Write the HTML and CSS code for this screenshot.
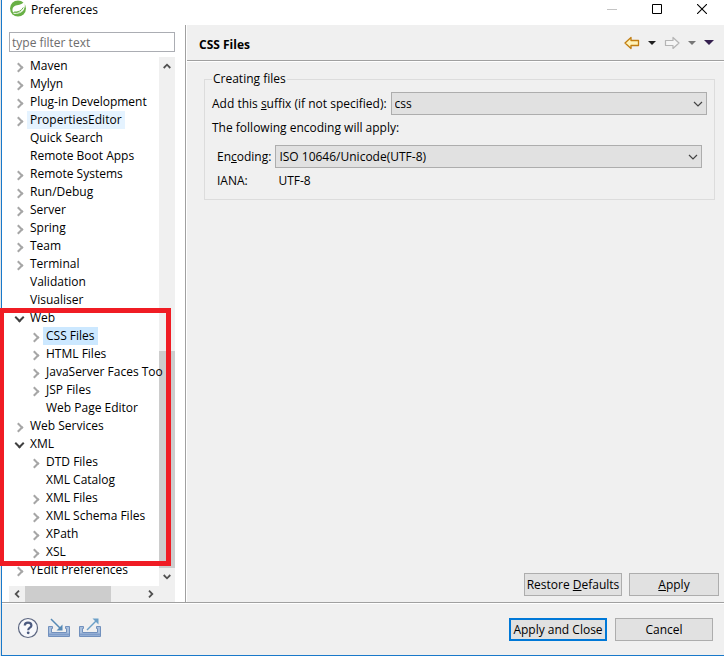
FILE: index.html
```html
<!DOCTYPE html>
<html lang="en">
<head>
    <meta charset="UTF-8">
    <meta name="viewport" content="width=device-width, initial-scale=1.0">
    <title>Preferences</title>
    <link rel="stylesheet" href="styles.css">
</head>
<body>
    <div class="window">
        <header class="titlebar">
            <svg class="logo" width="17" height="17" viewBox="0 0 17 17">
                <circle cx="8" cy="8.500" r="8" fill="#68b045"/>
                <path d="M14.300 1.500c1 3 .9 6.500-1 8.500-2.300 2.300-6 2-10.300 2.200-1.600-3.700.6-6.400 4-7C10.500 4.600 12.800 4 14.300 1.500z" fill="#fff"/>
                <path d="M3.500 13.300c4.500.4 8-.8 10.300-3.800" fill="none" stroke="#fff" stroke-width="1"/>
                <path d="M4 12.100c4 .1 7.500-1.100 9.300-4.600" fill="none" stroke="#68b045" stroke-width="1"/>
            </svg>
            <span class="title">Preferences</span>
            <button type="button" class="win-btn" aria-label="Minimize">
                <svg width="10" height="10" viewBox="0 0 10 10"><path d="M0 5.500h10" stroke="#c4c4c4"/></svg>
            </button>
            <button type="button" class="win-btn" aria-label="Maximize">
                <svg width="10" height="10" viewBox="0 0 10 10"><path d="M.5.5h9v9h-9z" fill="none" stroke="#000"/></svg>
            </button>
            <button type="button" class="win-btn" aria-label="Close">
                <svg width="10" height="10" viewBox="0 0 10 10"><path d="M0 0l10 10M10 0L0 10" stroke="#000" stroke-width="1.100"/></svg>
            </button>
        </header>

        <div class="content">
            <aside class="sidebar">
                <input type="text" class="filter" placeholder="type filter text" aria-label="Filter">
                <div class="tree-box">
                    <ul class="tree">
                        <li><button class="twistie" aria-label="Expand"></button><a href="#">Maven</a></li>
                        <li><button class="twistie" aria-label="Expand"></button><a href="#">Mylyn</a></li>
                        <li><button class="twistie" aria-label="Expand"></button><a href="#">Plug-in Development</a></li>
                        <li><button class="twistie" aria-label="Expand"></button><a href="#" class="hovered">PropertiesEditor</a></li>
                        <li class="leaf"><a href="#">Quick Search</a></li>
                        <li class="leaf"><a href="#">Remote Boot Apps</a></li>
                        <li><button class="twistie" aria-label="Expand"></button><a href="#">Remote Systems</a></li>
                        <li><button class="twistie" aria-label="Expand"></button><a href="#">Run/Debug</a></li>
                        <li><button class="twistie" aria-label="Expand"></button><a href="#">Server</a></li>
                        <li><button class="twistie" aria-label="Expand"></button><a href="#">Spring</a></li>
                        <li><button class="twistie" aria-label="Expand"></button><a href="#">Team</a></li>
                        <li><button class="twistie" aria-label="Expand"></button><a href="#">Terminal</a></li>
                        <li class="leaf"><a href="#">Validation</a></li>
                        <li class="leaf"><a href="#">Visualiser</a></li>
                        <li><button class="twistie open" aria-label="Collapse"></button><a href="#">Web</a>
                            <ul>
                                <li><button class="twistie" aria-label="Expand"></button><a href="#" class="selected">CSS Files</a></li>
                                <li><button class="twistie" aria-label="Expand"></button><a href="#">HTML Files</a></li>
                                <li><button class="twistie" aria-label="Expand"></button><a href="#">JavaServer Faces Too</a></li>
                                <li><button class="twistie" aria-label="Expand"></button><a href="#">JSP Files</a></li>
                                <li class="leaf"><a href="#">Web Page Editor</a></li>
                            </ul>
                        </li>
                        <li><button class="twistie" aria-label="Expand"></button><a href="#">Web Services</a></li>
                        <li><button class="twistie open" aria-label="Collapse"></button><a href="#">XML</a>
                            <ul>
                                <li><button class="twistie" aria-label="Expand"></button><a href="#">DTD Files</a></li>
                                <li class="leaf"><a href="#">XML Catalog</a></li>
                                <li><button class="twistie" aria-label="Expand"></button><a href="#">XML Files</a></li>
                                <li><button class="twistie" aria-label="Expand"></button><a href="#">XML Schema Files</a></li>
                                <li><button class="twistie" aria-label="Expand"></button><a href="#">XPath</a></li>
                                <li><button class="twistie" aria-label="Expand"></button><a href="#">XSL</a></li>
                            </ul>
                        </li>
                        <li><button class="twistie" aria-label="Expand"></button><a href="#">YEdit Preferences</a></li>
                    </ul>
                    <div class="vscroll">
                        <button type="button" aria-label="Scroll up"><svg width="8" height="6" viewBox="0 0 8 6"><path d="M.7 5L4 1.700 7.300 5" fill="none" stroke="#505050" stroke-width="1.800"/></svg></button>
                        <div class="vtrack"><div class="vthumb"></div></div>
                        <button type="button" aria-label="Scroll down"><svg width="8" height="6" viewBox="0 0 8 6"><path d="M.7 1L4 4.300 7.300 1" fill="none" stroke="#505050" stroke-width="1.800"/></svg></button>
                    </div>
                    <div class="hscroll">
                        <button type="button" aria-label="Scroll left"><svg width="6" height="8" viewBox="0 0 6 8"><path d="M5 .7L1.700 4 5 7.300" fill="none" stroke="#505050" stroke-width="1.800"/></svg></button>
                        <div class="htrack"><div class="hthumb"></div></div>
                        <button type="button" aria-label="Scroll right"><svg width="6" height="8" viewBox="0 0 6 8"><path d="M1 .7L4.300 4 1 7.300" fill="none" stroke="#505050" stroke-width="1.800"/></svg></button>
                    </div>
                    <div class="scroll-corner"></div>
                </div>
            </aside>

            <main class="page">
                <div class="page-header">
                    <h1>CSS Files</h1>
                    <button type="button" class="nav" aria-label="Back">
                        <svg width="16" height="14" viewBox="0 0 16 14"><path d="M1 7l6-5.500v3h7.500v5H7v3z" fill="#fff3b8" stroke="#c17d11" stroke-width="1.300" stroke-linejoin="round"/></svg>
                    </button>
                    <button type="button" class="nav" aria-label="Back history">
                        <svg width="8" height="4" viewBox="0 0 8 4"><path d="M0 0h8L4 4z" fill="#202020"/></svg>
                    </button>
                    <button type="button" class="nav" aria-label="Forward">
                        <svg width="16" height="14" viewBox="0 0 16 14"><path d="M15 7L9 1.500v3H1.500v5H9v3z" fill="#f5f5f5" stroke="#b4b4b4" stroke-width="1.200" stroke-linejoin="round"/></svg>
                    </button>
                    <button type="button" class="nav" aria-label="Forward history">
                        <svg width="8" height="4" viewBox="0 0 8 4"><path d="M0 0h8L4 4z" fill="#777"/></svg>
                    </button>
                    <button type="button" class="nav" aria-label="Menu">
                        <svg width="10" height="5" viewBox="0 0 10 5"><path d="M0 0h10L5 5z" fill="#35204f"/></svg>
                    </button>
                </div>

                <form class="settings">
                    <fieldset>
                        <legend>Creating files</legend>
                        <div class="row">
                            <label for="suffix">Add this <u>s</u>uffix (if not specified):</label>
                            <div class="select">
                                <select id="suffix"><option>css</option></select>
                                <svg width="10" height="6" viewBox="0 0 10 6"><path d="M1 1l4 4 4-4" fill="none" stroke="#444" stroke-width="1.200"/></svg>
                            </div>
                        </div>
                        <p>The following encoding will apply:</p>
                        <div class="encoding">
                            <label for="encoding">En<u>c</u>oding:</label>
                            <div class="select">
                                <select id="encoding"><option>ISO 10646/Unicode(UTF-8)</option></select>
                                <svg width="10" height="6" viewBox="0 0 10 6"><path d="M1 1l4 4 4-4" fill="none" stroke="#444" stroke-width="1.200"/></svg>
                            </div>
                            <span>IANA:</span>
                            <output class="iana">UTF-8</output>
                        </div>
                    </fieldset>
                    <div class="page-buttons">
                        <button type="reset" class="btn">Restore <u>D</u>efaults</button>
                        <button type="button" class="btn btn-apply"><u>A</u>pply</button>
                    </div>
                </form>
            </main>
        </div>

        <footer class="footer">
            <button type="button" class="icon-btn" aria-label="Help">
                <svg width="22" height="22" viewBox="0 0 22 22">
                    <circle cx="11" cy="11" r="9.500" fill="#f7f8fb" stroke="#5c6680" stroke-width="1.200"/>
                    <path d="M7.800 8.600C7.800 6.600 9 5.700 11 5.700s3.400 1 3.400 2.700c0 2.300-3.200 2.300-3.200 4.800" fill="none" stroke="#4b5a80" stroke-width="2.200"/>
                    <circle cx="11.200" cy="15.800" r="1.400" fill="#4b5a80"/>
                </svg>
            </button>
            <button type="button" class="icon-btn" aria-label="Import">
                <svg width="22" height="20" viewBox="0 0 22 20">
                    <path d="M.5 8.500h4v2h-1v4h15v-4h-1v-2h4v10H.5z" fill="#a9c0de" stroke="#7190bd"/>
                    <path d="M1 16.500h20" stroke="#7f9dca" stroke-width="2"/>
                    <path d="M3 1l10 10" stroke="#5689b5" stroke-width="1.500"/>
                    <path d="M14.500 12.500v-6l-6 6z" fill="#5689b5"/>
                </svg>
            </button>
            <button type="button" class="icon-btn" aria-label="Export">
                <svg width="22" height="20" viewBox="0 0 22 20">
                    <path d="M.5 8.500h4v2h-1v4h15v-4h-1v-2h4v10H.5z" fill="#a9c0de" stroke="#7190bd"/>
                    <path d="M1 16.500h20" stroke="#7f9dca" stroke-width="2"/>
                    <path d="M8 12L18 2" stroke="#6ca0c8" stroke-width="1.500"/>
                    <path d="M19.500.5v6l-6-6z" fill="#6ca0c8"/>
                </svg>
            </button>
            <div class="dialog-buttons">
                <button type="button" class="btn btn-default">Apply and Close</button>
                <button type="button" class="btn">Cancel</button>
            </div>
        </footer>

        <div class="highlight"></div>
    </div>
</body>
</html>
```

FILE: styles.css
```css
*,
*::before {
    box-sizing: border-box;
}

body {
    margin: 0;
    font-family: "Open Sans", "Noto Sans CJK KR", sans-serif;
    font-size: 12px;
    line-height: 18px;
    color: #000;
    background-color: #e4e4e4;
}

button,
input,
select {
    font: inherit;
    color: inherit;
    margin: 0;
    padding: 0;
    border: none;
    border-radius: 0;
    background: none;
}

svg {
    display: block;
}

a {
    color: inherit;
    text-decoration: none;
}

.window {
    position: relative;
    display: flex;
    flex-direction: column;
    min-height: 100vh;
    margin-left: 1px;
    border-left: 1px solid #1979ca;
    border-bottom: 1px solid #1979ca;
    background-color: #f0f0f0;
}

/* title bar */
.titlebar {
    display: flex;
    align-items: flex-start;
    height: 25px;
    padding-left: 8px;
    background-color: #fff;
}

.title {
    flex: 1;
    padding-top: 1px;
    margin-left: 4px;
}

.win-btn {
    display: flex;
    justify-content: center;
    width: 45px;
    padding-top: 4px;
}

.content {
    flex: 1;
    display: flex;
    border-bottom: 1px solid #a0a0a0;
}

/* left side */
.sidebar {
    display: flex;
    flex-direction: column;
    gap: 5px;
    width: 184px;
    padding: 7px 10px 0 7px;
    border-right: 1px solid #a0a0a0;
    background-color: #fff;
}

.filter {
    height: 20px;
    padding: 0 2px;
    border: 1px solid #abadb3;
    background-color: #fff;
}

.filter::placeholder {
    color: #6d6d6d;
    opacity: 1;
}

.tree-box {
    flex: 1;
    display: grid;
    grid-template-columns: minmax(0, 1fr) 16px;
    grid-template-rows: 1fr 16px;
}

.tree,
.tree ul {
    margin: 0;
    padding: 0;
    list-style: none;
}

/* long names may run a little over the scroll bar */
.tree {
    z-index: 1;
    margin-right: -4px;
    padding-left: 6px;
    overflow: hidden;
    white-space: nowrap;
}

.tree ul {
    padding-left: 16px;
}

.tree a {
    display: inline-block;
    height: 18px;
    padding: 0 3px;
    margin-left: -3px;
    vertical-align: top;
}

.tree ul a {
    padding-right: 0;
}

.tree .leaf {
    padding-left: 15px;
}

.tree .hovered {
    background-color: #e5f3ff;
}

.tree .selected {
    padding-right: 3px;
    background-color: #cce8ff;
}

.twistie {
    width: 15px;
    height: 18px;
    padding-top: 2px;
    vertical-align: top;
}

.twistie::before {
    content: "";
    display: block;
    width: 7px;
    height: 7px;
    border-top: 2px solid #a6a6a6;
    border-right: 2px solid #a6a6a6;
    transform: rotate(45deg);
}

.twistie.open {
    padding: 0 0 1px 1px;
}

.twistie.open::before {
    border-color: #404040;
    transform: rotate(135deg);
}

/* scroll bars */
.vscroll,
.hscroll,
.scroll-corner {
    display: flex;
    background-color: #f0f0f0;
}

.vscroll {
    flex-direction: column;
}

.vscroll button,
.hscroll button {
    display: flex;
    align-items: center;
    justify-content: center;
    width: 16px;
    height: 18px;
}

.hscroll button {
    height: 16px;
}

.vtrack {
    flex: 1;
    display: flex;
    flex-direction: column;
    justify-content: flex-end;
}

.vthumb {
    height: 44%;
    background-color: #cdcdcd;
}

.htrack {
    flex: 1;
}

.hthumb {
    width: 86px;
    height: 16px;
    background-color: #cdcdcd;
}

/* right side */
.page {
    flex: 1;
    display: flex;
    flex-direction: column;
    border-left: 1px solid #fff;
}

.page-header {
    display: flex;
    align-items: center;
    gap: 8px;
    height: 36px;
    padding: 0 10px 0 12px;
    border-bottom: 1px solid #a0a0a0;
}

.page-header h1 {
    flex: 1;
    margin: 0;
    padding-top: 4px;
    font-size: 12px;
    font-weight: bold;
}

.settings {
    flex: 1;
    display: flex;
    flex-direction: column;
    justify-content: space-between;
    padding: 8px 5px 6px 17px;
    border-top: 1px solid #fff;
}

fieldset {
    margin: 0 4px 0 0;
    padding: 4px 7px 9px 7px;
    border: 1px solid #dcdcdc;
}

legend {
    padding: 0 1px;
}

.row {
    display: flex;
    align-items: center;
    gap: 4px;
}

.select {
    position: relative;
    flex: 1;
}

.select select {
    display: block;
    appearance: none;
    width: 100%;
    height: 23px;
    padding: 0 3px;
    border: 1px solid #adadad;
    background-color: #e1e1e1;
}

.select svg {
    position: absolute;
    top: 9px;
    right: 4px;
    pointer-events: none;
}

fieldset p {
    margin: 4px 0 8px;
}

.encoding {
    display: grid;
    grid-template-columns: auto 1fr;
    align-items: center;
    gap: 4px;
    padding: 0 5px;
}

.iana {
    padding-left: 3px;
}

.page-buttons,
.dialog-buttons {
    display: flex;
    justify-content: flex-end;
    gap: 7px;
}

.btn {
    min-width: 98px;
    height: 23px;
    border: 1px solid #adadad;
    background-color: #e1e1e1;
}

.btn-apply {
    min-width: 90px;
}

.btn-default {
    border: 2px solid #0078d7;
}

/* bottom bar */
.footer {
    display: flex;
    align-items: center;
    gap: 9px;
    height: 52px;
    padding: 0 11px 0 15px;
    border-top: 1px solid #fff;
}

.icon-btn {
    padding-bottom: 3px;
}

.dialog-buttons {
    flex: 1;
    gap: 8px;
}

/* red frame round the web and xml nodes */
.highlight {
    position: absolute;
    z-index: 2;
    top: 308px;
    left: -3px;
    width: 172px;
    height: 258px;
    border: 5px solid #f01c24;
    pointer-events: none;
}
```
